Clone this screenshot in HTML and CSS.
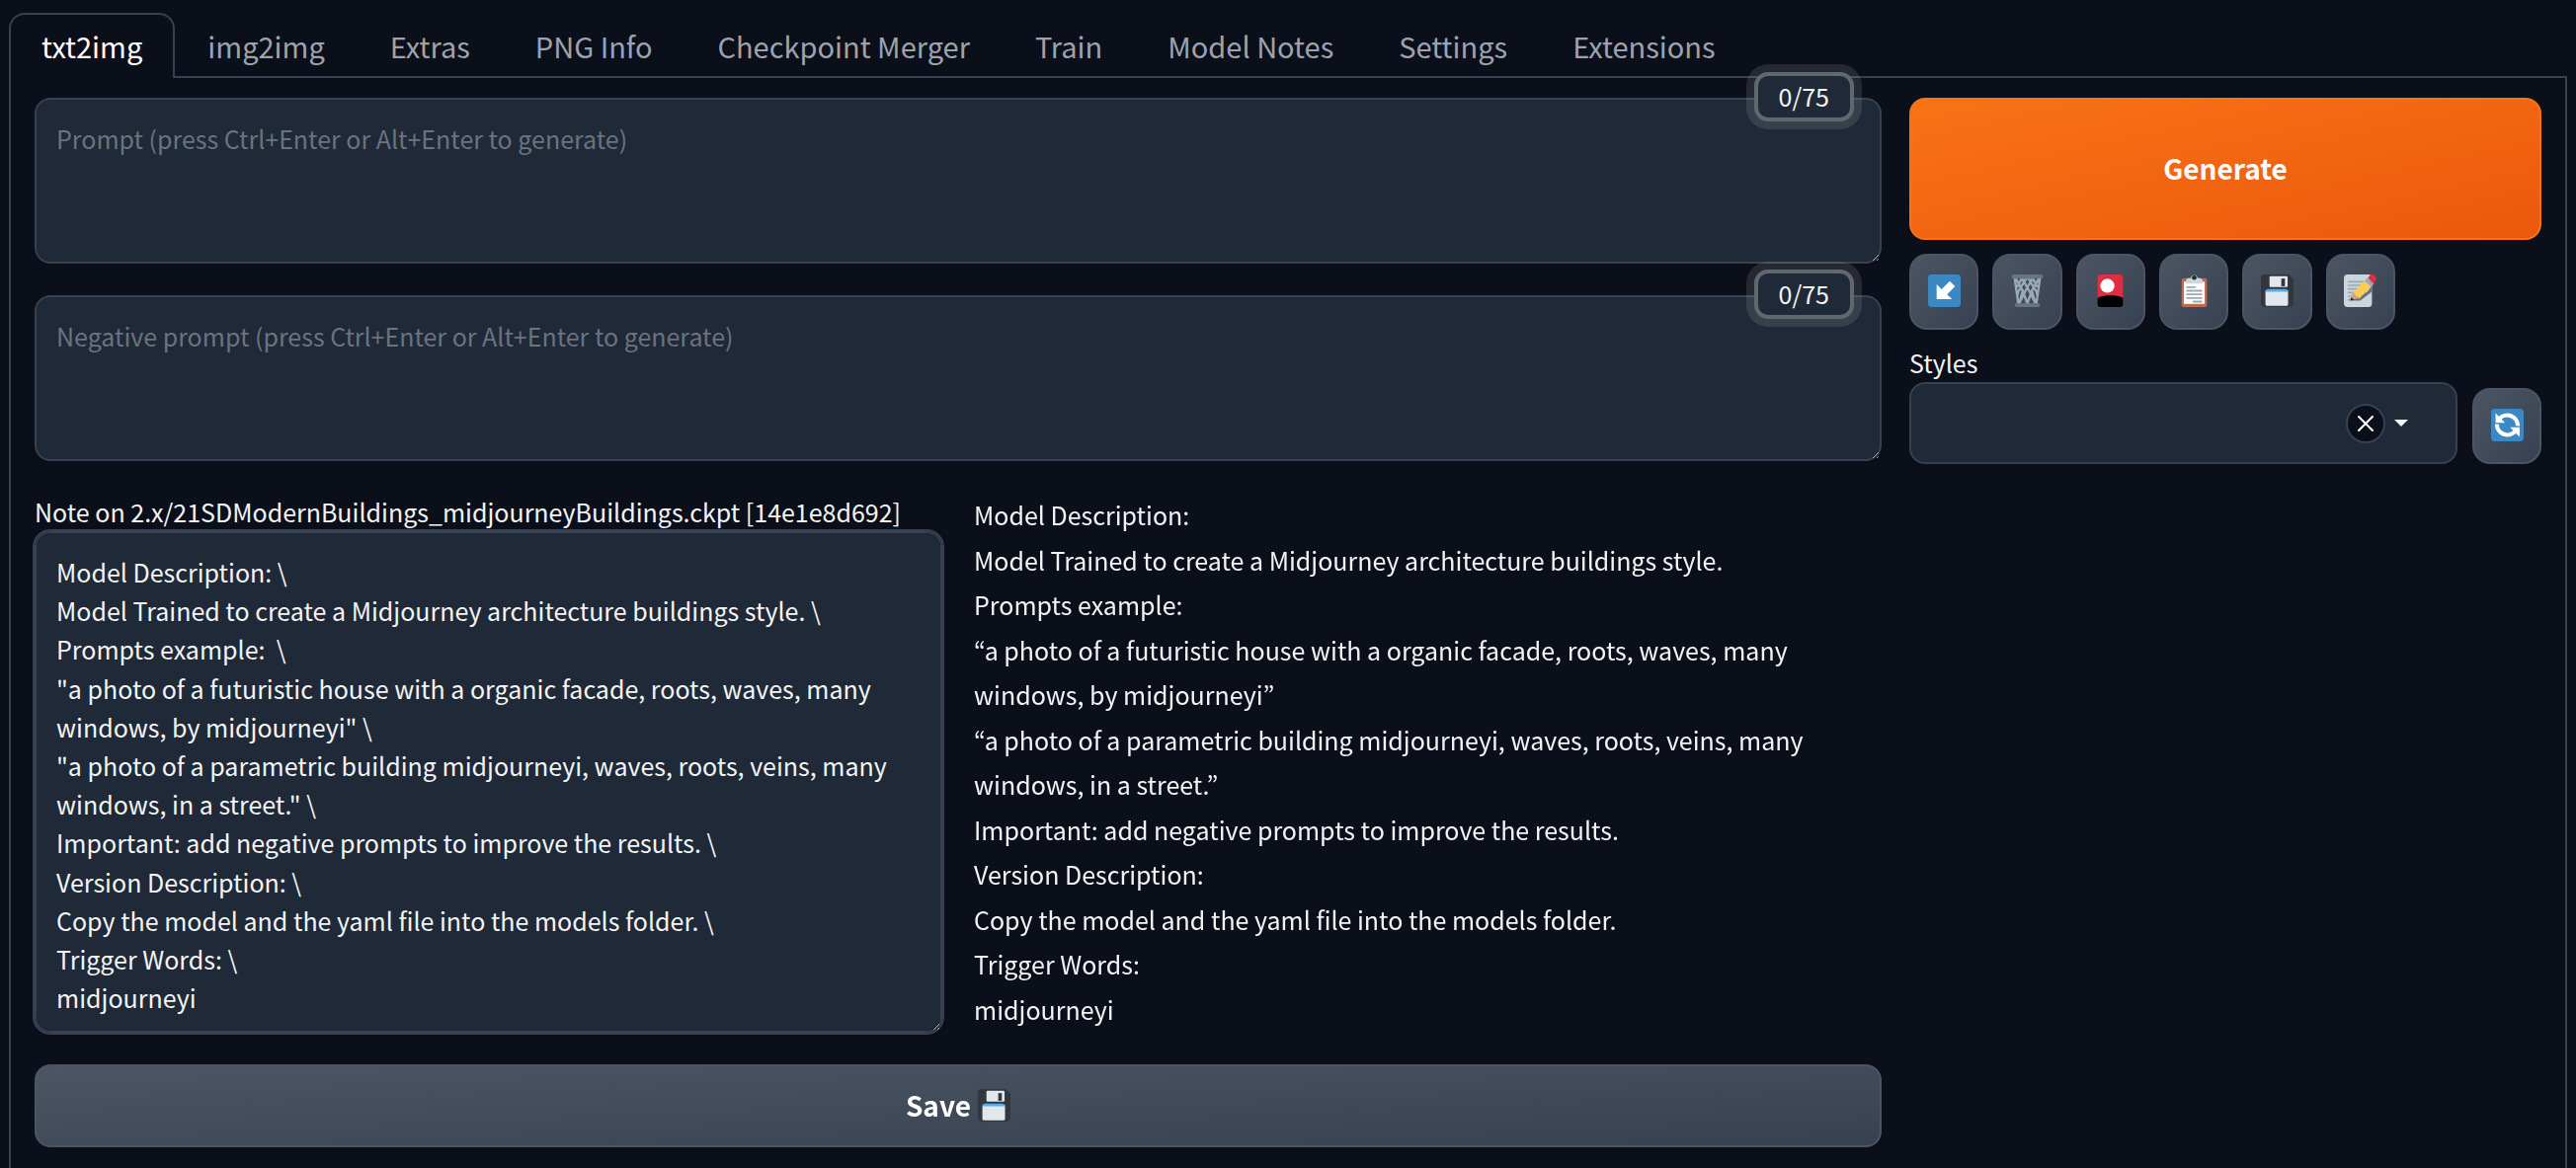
FILE: index.html
```html
<!DOCTYPE html>
<html lang="en">
<head>
<meta charset="utf-8">
<meta name="viewport" content="width=device-width, initial-scale=1">
<title>Stable Diffusion</title>
<link rel="stylesheet" href="styles.css">
</head>
<body>
<svg class="sprite" aria-hidden="true">
  <symbol id="floppy" viewBox="0 0 36 36">
    <path fill="#31373D" d="M4 36s-4 0-4-4V4s0-4 4-4h26c1 0 2 1 2 1l3 3s1 1 1 2v26s0 4-4 4H4z"/>
    <path fill="#E1E8ED" d="M5 19v14c0 1 .5 1.500 1.500 1.500h22c1 0 1.500-.5 1.500-1.500V18H5z"/>
    <path fill="#55ACEE" d="M5 19c0-2 1-3 3-3h19c2 0 3 1 3 3H5z"/>
    <path fill="#E1E8ED" d="M9.500 3.500c0-1 .5-1.500 1.500-1.500h17c1 0 1.500.5 1.500 1.500v9c0 1-.5 1.500-1.500 1.500H11c-1 0-1.500-.5-1.500-1.500v-9z"/>
    <path fill="#31373D" d="M22.500 4.500h4V13h-4z"/>
  </symbol>
</svg>

<nav class="tabs" role="tablist" aria-label="Sections">
  <button class="tab tab-active" role="tab" aria-selected="true">txt2img</button>
  <button class="tab" role="tab" aria-selected="false">img2img</button>
  <button class="tab" role="tab" aria-selected="false">Extras</button>
  <button class="tab" role="tab" aria-selected="false">PNG Info</button>
  <button class="tab" role="tab" aria-selected="false">Checkpoint Merger</button>
  <button class="tab" role="tab" aria-selected="false">Train</button>
  <button class="tab" role="tab" aria-selected="false">Model Notes</button>
  <button class="tab" role="tab" aria-selected="false">Settings</button>
  <button class="tab" role="tab" aria-selected="false">Extensions</button>
</nav>

<main class="panel">
  <div class="main-column">
    <div class="prompt">
      <textarea class="field prompt-input" aria-label="Prompt" placeholder="Prompt (press Ctrl+Enter or Alt+Enter to generate)"></textarea>
      <span class="counter">0/75</span>
    </div>
    <div class="prompt">
      <textarea class="field prompt-input" aria-label="Negative prompt" placeholder="Negative prompt (press Ctrl+Enter or Alt+Enter to generate)"></textarea>
      <span class="counter">0/75</span>
    </div>

    <section class="notes">
      <div class="note-editor">
        <label class="label" for="note">Note on 2.x/21SDModernBuildings_midjourneyBuildings.ckpt [14e1e8d692]</label>
        <textarea class="field note-input" id="note" rows="12">Model Description: \
Model Trained to create a Midjourney architecture buildings style. \
Prompts example:  \
"a photo of a futuristic house with a organic facade, roots, waves, many windows, by midjourneyi" \
"a photo of a parametric building midjourneyi, waves, roots, veins, many windows, in a street." \
Important: add negative prompts to improve the results. \
Version Description: \
Copy the model and the yaml file into the models folder. \
Trigger Words: \
midjourneyi</textarea>
      </div>
      <p class="note-preview">Model Description:<br>
        Model Trained to create a Midjourney architecture buildings style.<br>
        Prompts example:<br>
        “a photo of a futuristic house with a organic facade, roots, waves, many windows, by midjourneyi”<br>
        “a photo of a parametric building midjourneyi, waves, roots, veins, many windows, in a street.”<br>
        Important: add negative prompts to improve the results.<br>
        Version Description:<br>
        Copy the model and the yaml file into the models folder.<br>
        Trigger Words:<br>
        midjourneyi</p>
    </section>

    <button class="button save">Save <svg class="icon" aria-hidden="true"><use href="#floppy"/></svg></button>
  </div>

  <aside class="side-column">
    <button class="button generate">Generate</button>

    <div class="tools">
      <button class="button tool" aria-label="Read generation parameters">
        <svg class="icon" viewBox="0 0 36 36"><rect width="36" height="36" rx="4" fill="#3B88C3"/><path fill="#fff" d="M9.500 11v16.300h17L21 22l8.800-8.800-5.800-5.900-9 9.100z"/></svg>
      </button>
      <button class="button tool" aria-label="Clear prompt">
        <svg class="icon" viewBox="0 0 36 36">
          <path fill="none" stroke="#99AAB5" stroke-width="2.600" d="M4 4l4 28M32 4l-4 28M5 4l8 14 5 14M12 4l8 14 7 14M19 4l9 15 1 4M31 4l-8 14-5 14M24 4l-8 14-7 14M17 4L8 19l-1 4M12 4l-5 10M24 4l5 10M9 32l4-14M27 32l-4-14"/>
          <rect x="0.500" width="35" height="4.500" rx="2.200" fill="#66757F"/>
          <rect x="4" y="31.500" width="28" height="4.500" rx="2.200" fill="#66757F"/>
        </svg>
      </button>
      <button class="button tool" aria-label="Show extra networks">
        <svg class="icon" viewBox="0 0 36 36">
          <path fill="#DD2E44" d="M4 3c0-1.700 1.300-3 3-3h22c1.700 0 3 1.300 3 3v25H4z"/>
          <path d="M4 26c7-4 21-4 28 0v7c0 1.700-1.300 3-3 3H7c-1.700 0-3-1.300-3-3z"/>
          <circle cx="14.800" cy="12.500" r="7.800" fill="#fff"/>
        </svg>
      </button>
      <button class="button tool" aria-label="Apply selected styles">
        <svg class="icon" viewBox="0 0 36 36">
          <rect x="4" y="4" width="28" height="32" rx="2.500" fill="#C1694F"/>
          <path fill="#fff" d="M6.500 8h23v24.500h-23z"/>
          <path fill="#CCD6DD" d="M9 10V7c0-2 1-3 3-3h2.500a3.500 3.500 0 0 1 7 0H24c2 0 3 1 3 3v3z"/>
          <circle cx="18" cy="3.500" r="2.600" fill="#292F33"/>
          <path stroke="#99AAB5" stroke-width="2" stroke-linecap="round" d="M10 14h9M10 18h16M10 22h16M10 26h16M17 30h9"/>
        </svg>
      </button>
      <button class="button tool" aria-label="Save style">
        <svg class="icon" aria-hidden="true"><use href="#floppy"/></svg>
      </button>
      <button class="button tool" aria-label="Edit styles">
        <svg class="icon" viewBox="0 0 36 36">
          <rect x="0" y="0" width="31" height="36" rx="4" fill="#CCD6DD"/>
          <path stroke="#99AAB5" stroke-width="1.800" stroke-linecap="round" d="M5 8h19M5 12h17M5 16h14M5 20h9M5 24h6M5 28h5"/>
          <path fill="#66757F" d="M8 29l18-10 5-7v7L18 29z"/>
          <path fill="#D99E82" d="M7.500 29l2.500-9 7 6z"/>
          <path fill="#FFCC4D" d="M10 20L23 7l7 6.500L16.500 27c0-2-1-3-3-3 0-2-1.200-3.500-3.500-4z"/>
          <path fill="#99AAB5" d="M23 7l3.500-3.500 7 6.500-3.500 3.500z"/>
          <path fill="#DD2E44" d="M26.500 3.500L29 1c1.500-1.300 3-1.300 4.500 0L35 2.500c1.300 1.500 1.300 3 0 4.500l-2.500 3z"/>
          <path fill="#292F33" d="M7 29l1-4 3.500 3z"/>
        </svg>
      </button>
    </div>

    <div class="styles-row">
      <div class="styles-field">
        <label class="label" for="styles">Styles</label>
        <div class="dropdown">
          <select class="field styles-select" id="styles"><option></option></select>
          <div class="dropdown-controls">
            <button class="clear" aria-label="Clear styles">
              <svg class="cross" viewBox="0 0 16 16"><path fill="none" stroke="#fff" stroke-width="2" stroke-linecap="round" d="M1 1l14 14M15 1L1 15"/></svg>
            </button>
            <svg class="caret" viewBox="0 0 14 7" aria-hidden="true"><path fill="#f3f4f6" d="M0 0h14L7 7z"/></svg>
          </div>
        </div>
      </div>
      <button class="button tool refresh" aria-label="Refresh styles">
        <svg class="icon" viewBox="0 0 36 36">
          <rect width="36" height="36" rx="4" fill="#3B88C3"/>
          <path fill="none" stroke="#fff" stroke-width="4.500" d="M9 11.500a11.500 11.500 0 0 1 20.500 7.500M27 24.500A11.500 11.500 0 0 1 6.500 17"/>
          <path fill="#fff" d="M5 5v10.500h10.500zM31.500 31V20.500H21z"/>
        </svg>
      </button>
    </div>
  </aside>
</main>
</body>
</html>
```
FILE: styles.css
```css
:root {
  --bg: #0b0f19;
  --field: #1f2937;
  --line: #374151;
  --text: #f3f4f6;
  --muted: #9ca3af;
  --placeholder: #6b7280;
}

* { box-sizing: border-box; }

body {
  display: flex;
  flex-direction: column;
  min-height: 100vh;
  margin: 0;
  padding: 13px 9px 0;
  background: var(--bg);
  color: var(--text);
  font: 25px/38px "Noto Sans CJK KR", "Noto Sans", sans-serif;
}

button, textarea, select { margin: 0; color: inherit; font: inherit; }
svg { display: block; flex: none; }
.sprite { position: absolute; width: 0; height: 0; }

.tabs {
  display: flex;
  border-bottom: 2px solid var(--line);
}

.tab {
  height: 66px;
  margin-bottom: -2px;
  padding: 0 31px 2px;
  border: 2px solid transparent;
  border-bottom: 0;
  border-radius: 16px 16px 0 0;
  background: none;
  color: var(--muted);
  font-size: 29px;
}

.tab-active {
  border-color: var(--line);
  background: var(--bg);
  color: #fff;
}

.panel {
  display: grid;
  flex: 1;
  grid-template-columns: 187fr 64fr;
  gap: 28px;
  align-items: start;
  padding: 20px 24px;
  border: solid var(--line);
  border-width: 0 2px;
}

.main-column, .side-column {
  display: flex;
  flex-direction: column;
  min-width: 0;
}

.main-column { gap: 32px; }
.side-column { gap: 14px; }

.field {
  display: block;
  width: 100%;
  border: 2px solid var(--line);
  border-radius: 16px;
  outline: 0;
  background: var(--field);
}

textarea.field { padding: 20px; resize: vertical; }
.field::placeholder { color: var(--placeholder); opacity: 1; }

.prompt { position: relative; }
.prompt-input { height: 168px; }

.counter {
  position: absolute;
  top: -26px;
  right: 28px;
  padding: 1px 21px 3px;
  border: 4px solid #60686f;
  border-radius: 14px;
  background: var(--field);
  box-shadow: 0 0 0 8px rgba(192, 192, 192, 0.15);
}

.notes {
  display: grid;
  grid-template-columns: 1fr 1fr;
  gap: 32px;
}

.label { display: block; line-height: 39px; }

.note-input {
  height: 508px;
  box-shadow: 0 0 0 2px var(--line);
  line-height: 1.568;
}

.note-preview { margin: 0; line-height: 1.82; }

.button {
  display: flex;
  align-items: center;
  justify-content: center;
  padding: 0 0 2px;
  border: 2px solid #4b5563;
  border-radius: 16px;
  background: linear-gradient(to bottom right, #4b5563, #374151);
  color: #fff;
  font-size: 28px;
  font-weight: 600;
}

.icon { width: 33px; height: 33px; }

.save { gap: 7px; height: 84px; }

.generate {
  height: 144px;
  border-color: #f97316;
  background: linear-gradient(to bottom right, #f97316, #ea580c);
}

.tools {
  display: grid;
  grid-template-columns: repeat(6, 1fr);
  gap: 14px;
  max-width: 492px;
}

.tool { height: 77px; border-radius: 18px; }

.styles-row {
  display: flex;
  align-items: flex-end;
  gap: 15px;
}

.styles-field { flex: 1; }
.dropdown { position: relative; }
.styles-select { height: 83px; appearance: none; }

.dropdown-controls {
  position: absolute;
  inset: 0 50px 0 auto;
  display: flex;
  align-items: center;
  gap: 9px;
}

.clear {
  display: grid;
  place-items: center;
  width: 40px;
  height: 40px;
  padding: 0;
  border: 2px solid var(--line);
  border-radius: 50%;
  background: var(--bg);
}

.cross { width: 16px; height: 16px; }
.caret { width: 14px; height: 7px; }
.refresh { width: 70px; }
```
